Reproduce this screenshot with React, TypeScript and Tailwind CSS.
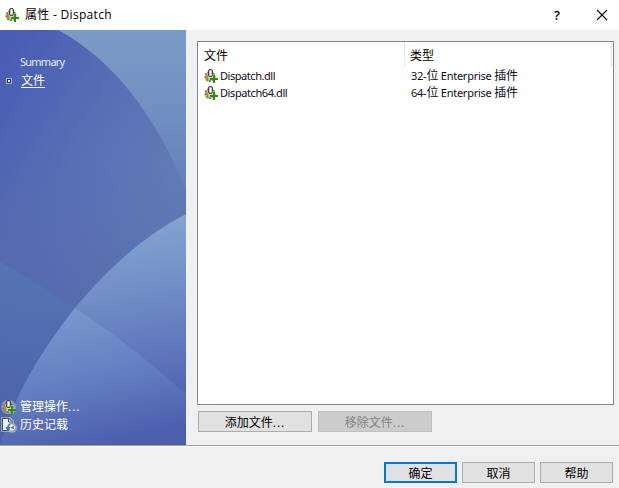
import type { ReactNode } from "react";

const cjk = "font-['Open_Sans','Noto_Sans_CJK_SC',sans-serif]";
const latin = "font-['Noto_Sans','Noto_Sans_CJK_SC',sans-serif]";

function PluginIcon({ halo = false }: { halo?: boolean }) {
  return (
    <svg
      width={halo ? 16 : 14}
      height={halo ? 16 : 14}
      viewBox={halo ? "-1 -1 16 16" : "0 0 14 14"}
      className="block shrink-0"
    >
      {halo && <circle cx="6.5" cy="7" r="7.3" fill="#c5cce0" opacity=".5" />}
      <circle cx="6" cy="7.5" r="4.5" fill="#d8cfa4" stroke="#6f6b5c" strokeWidth="2" strokeDasharray="2 1" />
      <path d="M1.5 9.5l3 2.5M2 5l2 5" stroke="#a98a2a" strokeWidth="1.5" />
      <rect x="4.5" y="0.5" width="4" height="7" rx="1.5" fill="#c9c9c5" stroke="#3f3f3b" />
      <path d="M6.5 2v4" stroke="#fff" />
      <path d="M10 5v9M5.5 10H14" stroke="#e5efdd" strokeWidth="3" opacity=".5" />
      <path d="M10 6v8M6 10h8" stroke="#2c8d0b" strokeWidth="2" />
    </svg>
  );
}

function HistoryIcon() {
  return (
    <svg width="16" height="16" viewBox="0 0 16 16" className="block shrink-0">
      <path d="M1 1h8l3 3v10H1z" fill="#c5cce0" stroke="#c5cce0" strokeWidth="2" strokeLinejoin="round" opacity=".6" />
      <circle cx="11" cy="11" r="5" fill="#c5cce0" opacity=".6" />
      <path d="M1.5 1.5H8l3 3v9H1.5z" fill="#edf0f0" stroke="#4d5259" />
      <path d="M7.5 2v3h3" fill="none" stroke="#4d5259" />
      <circle cx="11" cy="10.5" r="3.8" fill="#f4f4ef" stroke="#8a9199" />
      <path d="M10.5 11L13 8.5M10.5 11H13" fill="none" stroke="#252d35" />
      <path d="M9.5 6.5Q6 7.5 7 12M5 10.5h4l-2 3z" fill="#2683ad" stroke="#2683ad" />
    </svg>
  );
}

function Backdrop() {
  return (
    <svg width="186" height="415" viewBox="0 0 186 415" className="absolute inset-0">
      <defs>
        <linearGradient id="corner" x1="0" y1="0" x2="0" y2="162" gradientUnits="userSpaceOnUse">
          <stop stopColor="#7b9bc6" />
          <stop offset="0.5" stopColor="#7190c2" />
          <stop offset="1" stopColor="#637fb9" />
        </linearGradient>
        <linearGradient id="main" gradientUnits="userSpaceOnUse" x1="0" y1="40" x2="180" y2="150">
          <stop stopColor="#4a5db4" />
          <stop offset="0.5" stopColor="#576fb5" />
          <stop offset="1" stopColor="#627db7" />
        </linearGradient>
        <linearGradient id="shade" gradientUnits="userSpaceOnUse" x1="80" y1="120" x2="60" y2="280">
          <stop stopColor="#5365a9" stopOpacity="0" />
          <stop offset="1" stopColor="#5365a9" stopOpacity="0.7" />
        </linearGradient>
        <linearGradient id="left" gradientUnits="userSpaceOnUse" x1="20" y1="235" x2="0" y2="400">
          <stop stopColor="#5674b2" />
          <stop offset="1" stopColor="#4b63a8" />
        </linearGradient>
        <linearGradient id="lens" gradientUnits="userSpaceOnUse" x1="150" y1="190" x2="180" y2="360">
          <stop stopColor="#82a4cf" />
          <stop offset="0.35" stopColor="#7391c9" />
          <stop offset="1" stopColor="#5566b4" />
        </linearGradient>
        <linearGradient id="bottom" gradientUnits="userSpaceOnUse" x1="70" y1="280" x2="100" y2="415">
          <stop stopColor="#7898ce" />
          <stop offset="0.5" stopColor="#6480c1" />
          <stop offset="1" stopColor="#4c5fae" />
        </linearGradient>
      </defs>
      <path d="M0 0H186V415H0Z" fill="url(#corner)" />
      <path d="M0 0H58C115 31 156 87 186 160V415H0Z" fill="url(#main)" />
      <path d="M0 0H58C115 31 156 87 186 160V415H0Z" fill="url(#shade)" />
      <path d="M0 232Q40 254 75 279L75 415H0Z" fill="url(#left)" />
      <path d="M186 184C144 206 109 237 75 278Q34 330 15 374L0 415H186Z" fill="url(#lens)" />
      <path d="M75 278Q136 318 186 365V415H0L15 374Q34 330 75 278Z" fill="url(#bottom)" />
    </svg>
  );
}

function Dots() {
  return <span className="tracking-[1px]">...</span>;
}

function Button({ children, className }: { children: ReactNode; className: string }) {
  return (
    <button className={`flex h-[21px] items-center justify-center text-xs leading-none ${className}`}>
      <span className="pt-[2px]">{children}</span>
    </button>
  );
}

const files = [
  { name: "Dispatch.dll", bits: "32-", width: "tracking-[-0.45px]" },
  { name: "Dispatch64.dll", bits: "64-", width: "tracking-[-0.42px]" },
];

export default function App() {
  return (
    <div className={`flex h-[488px] w-[619px] flex-col overflow-hidden bg-[#f0f0f0] text-xs text-black ${cjk}`}>
      <header className="flex h-[30px] shrink-0 items-center bg-white pl-[5px]">
        <PluginIcon />
        <h1 className="ml-[6px] text-xs leading-4 tracking-[0.3px]">属性 - Dispatch</h1>
        <span className="ml-auto w-[10px] text-center text-[13px] font-semibold leading-none">?</span>
        <svg width="12" height="12" viewBox="0 0 12 12" className="ml-[34px] mr-[11px]">
          <path d="M1 1l10 10M11 1L1 11" stroke="#111" strokeWidth="1.2" />
        </svg>
      </header>
      <div className="flex h-[415px] shrink-0">
        <aside className="relative w-[186px] shrink-0 text-white">
          <Backdrop />
          <div className="relative flex h-full flex-col pt-[23px] pb-[11px]">
            <div className={`h-[18px] pl-[20px] text-[11px] leading-[18px] tracking-[-0.75px] text-[#e6eaf6] ${latin}`}>Summary</div>
            <div className="flex h-[19px] items-center">
              <span className="ml-[6px] mr-[9px] flex size-[6px] items-center justify-center border border-[#a3afd8] bg-[#2b3146]">
                <span className="size-[2px] shrink-0 bg-white" />
              </span>
              <a className="border-b border-white leading-[13px]">文件</a>
            </div>
            <div className="mt-auto flex h-[18px] items-center gap-[3px] pl-px">
              <PluginIcon halo />
              <span className="leading-[18px]">管理操作<Dots /></span>
            </div>
            <div className="flex h-[18px] items-center gap-[3px] pl-px">
              <HistoryIcon />
              <span className="leading-[18px]">历史记载</span>
            </div>
          </div>
        </aside>
        <main className="flex flex-col pl-[11px] pt-[11px]">
          <section className="h-[364px] w-[417px] border border-[#828790] bg-white">
            <div className="flex h-[25px] text-xs leading-[28px]">
              <span className="w-[207px] border-r border-[#e5e5e5] pl-[6px]">文件</span>
              <span className="w-[207px] border-r border-[#e5e5e5] pl-[5px]">类型</span>
            </div>
            {files.map((file) => (
              <div key={file.name} className={`flex h-[17px] items-center text-[11px] leading-[17px] text-[#0c0c1c] ${latin}`}>
                <div className="flex w-[213px] items-center gap-[2px] pl-[6px]">
                  <PluginIcon />
                  <span className={file.width}>{file.name}</span>
                </div>
                <span className="tracking-[-0.25px]">
                  {file.bits}<span className="text-xs">位</span> Enterprise <span className="text-xs">插件</span>
                </span>
              </div>
            ))}
          </section>
          <div className="mt-[6px] flex gap-[6px] pl-px">
            <Button className="w-[114px] border border-[#adadad] bg-[#e1e1e1]">添加文件<Dots /></Button>
            <Button className="w-[114px] border border-[#bfbfbf] bg-[#cccccc] text-[#838383]">移除文件<Dots /></Button>
          </div>
        </main>
      </div>
      <footer className="flex flex-1 gap-[5px] border-t border-[#a0a0a0] pl-[384px] pt-[16px] shadow-[inset_0_1px_0_#fff]">
        <Button className="w-[73px] border-2 border-[#0078d7] bg-[#e1e1e1]">确定</Button>
        <Button className="w-[73px] border border-[#adadad] bg-[#e1e1e1]">取消</Button>
        <Button className="w-[73px] border border-[#adadad] bg-[#e1e1e1]">帮助</Button>
      </footer>
    </div>
  );
}
